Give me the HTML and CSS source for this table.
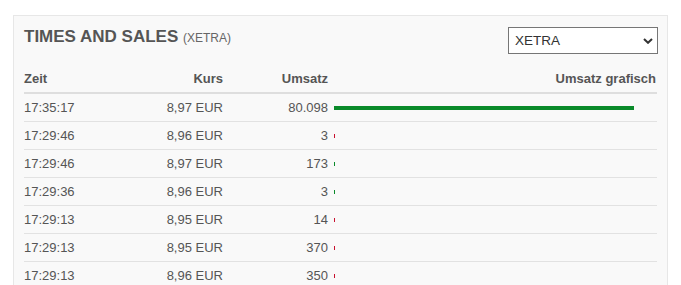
FILE: index.html
```html
<!DOCTYPE html>
<html lang="de">
<head>
<meta charset="utf-8">
<title>Times and Sales</title>
<link rel="stylesheet" href="styles.css">
</head>
<body>
<section class="panel">
  <header class="panel-head">
    <h2 class="title">TIMES AND SALES <span class="sub">(XETRA)</span></h2>
    <div class="select-wrap">
      <select class="select">
        <option>XETRA</option>
      </select>
      <svg class="chev" width="10" height="6" viewBox="0 0 10 6"><path d="M1 1 L5 4.8 L9 1" fill="none" stroke="#333" stroke-width="2"/></svg>
    </div>
  </header>
  <table class="ts">
    <colgroup>
      <col class="c-time"><col class="c-kurs"><col class="c-ums"><col class="c-bar">
    </colgroup>
    <thead>
      <tr><th class="l">Zeit</th><th class="r">Kurs</th><th class="r">Umsatz</th><th class="r gr">Umsatz grafisch</th></tr>
    </thead>
    <tbody>
      <tr><td>17:35:17</td><td class="r">8,97 EUR</td><td class="r">80.098</td><td class="barcell"><span class="bar up" style="width:300px"></span></td></tr>
      <tr><td>17:29:46</td><td class="r">8,96 EUR</td><td class="r">3</td><td class="barcell"><span class="bar down" style="width:1px"></span></td></tr>
      <tr><td>17:29:46</td><td class="r">8,97 EUR</td><td class="r">173</td><td class="barcell"><span class="bar up" style="width:1px"></span></td></tr>
      <tr><td>17:29:36</td><td class="r">8,96 EUR</td><td class="r">3</td><td class="barcell"><span class="bar up" style="width:1px"></span></td></tr>
      <tr><td>17:29:13</td><td class="r">8,95 EUR</td><td class="r">14</td><td class="barcell"><span class="bar down" style="width:1px"></span></td></tr>
      <tr><td>17:29:13</td><td class="r">8,95 EUR</td><td class="r">370</td><td class="barcell"><span class="bar down" style="width:1px"></span></td></tr>
      <tr><td>17:29:13</td><td class="r">8,96 EUR</td><td class="r">350</td><td class="barcell"><span class="bar down" style="width:1px"></span></td></tr>
    </tbody>
  </table>
</section>
</body>
</html>
```

FILE: styles.css
```css
html, body {
  margin: 0;
  padding: 0;
  background: #fff;
}
body {
  font-family: "Liberation Sans", Arial, sans-serif;
  color: #555;
}
.panel {
  margin: 15px 13px 0 13px;
  background: #f9f9f9;
  border: 1px solid #e7e7e7;
  padding: 11px 9px 20px 10px;
  box-sizing: border-box;
}
.panel-head {
  display: flex;
  justify-content: space-between;
  align-items: flex-start;
}
.title {
  margin: 0;
  font-size: 17px;
  line-height: 20px;
  font-weight: bold;
  color: #555;
}
.sub {
  font-size: 12px;
  font-weight: normal;
  color: #666;
}
.select-wrap {
  position: relative;
  width: 150px;
  height: 27px;
}
.select {
  appearance: none;
  -webkit-appearance: none;
  width: 150px;
  height: 27px;
  box-sizing: border-box;
  border: 1px solid #767676;
  border-radius: 0;
  background: #fff;
  font-family: "Liberation Sans", Arial, sans-serif;
  font-size: 13.5px;
  color: #333;
  padding: 0 0 0 6px;
  margin: 0;
}
.chev {
  position: absolute;
  right: 5px;
  top: 11px;
}
.ts {
  margin-top: 11px;
  width: 633px;
  border-collapse: separate;
  border-spacing: 0;
  table-layout: fixed;
  font-size: 13px;
  line-height: 15px;
}
.c-time { width: 100px; }
.c-kurs { width: 99px; }
.c-ums { width: 105px; }
.c-bar { width: 329px; }
th {
  font-weight: bold;
  color: #555;
  padding: 6px 0;
  border-bottom: 2px solid #dedede;
}
td {
  color: #555;
  padding: 6px 0;
  height: 15px;
  border-bottom: 1px solid #e2e2e2;
  white-space: nowrap;
}
.l { text-align: left; }
.r { text-align: right; }
th.gr { padding-right: 1px; }
.barcell {
  padding-left: 6px;
}
.bar {
  display: block;
  height: 4px;
  margin-top: 1px;
}
.bar.up { background: #0a8a2a; }
.bar.down { background: #c8102e; }
```
